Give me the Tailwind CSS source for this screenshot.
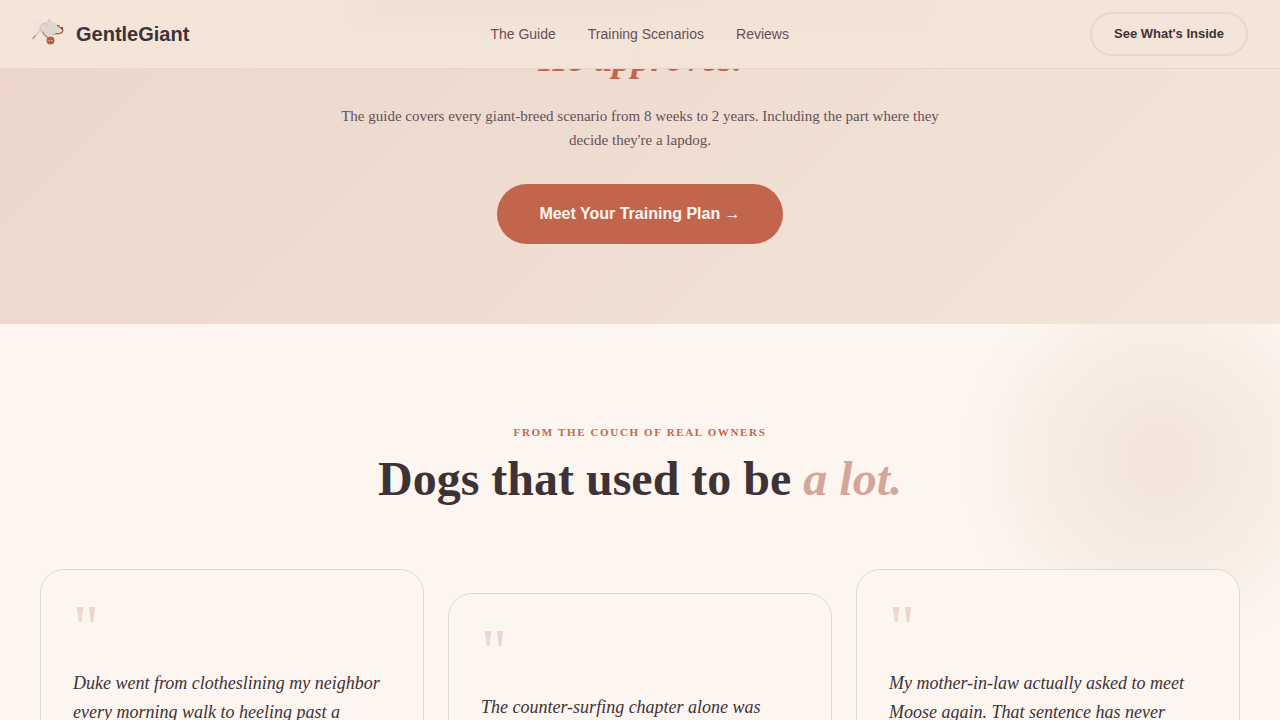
<!DOCTYPE html>
<html lang="en">
  <head>
    <meta charset="UTF-8" />
    <meta name="viewport" content="width=device-width, initial-scale=1.0" />
    <title>GentleGiant</title>
    <!-- Tailwind CSS -->
    <script src="https://cdn.jsdelivr.net/npm/@tailwindcss/browser@4"></script>
  </head>
  <body class="bg-[#fdf6f0] text-[#3d3337] font-['Liberation_Serif',serif]">
    <!-- Header -->
    <header
      class="fixed inset-x-0 top-0 z-10 flex items-center justify-between border-b border-[#ead5c8] bg-linear-to-r from-[#f4e4d9] via-[#f3e4d8] to-[#f4e5da] px-8 py-3 font-['Liberation_Sans',sans-serif]"
    >
      <div class="pointer-events-none absolute inset-x-[28%] top-0 h-5 bg-[#ede0d2]/50 blur-sm"></div>
      <a href="#" class="relative flex items-center gap-3 text-xl font-bold">
        <svg class="size-8" viewBox="0 0 32 32" fill="none" aria-hidden="true">
          <path d="M1 2h11L9 13 1 18Z" fill="#ecdfd5" opacity=".4" />
          <path d="M10 6c2-2 4-1.500 5.500-2.500L17 1.500l2 2.500c3 0 5 1 6.500 3l2 3.500c0 3-1 4.500-3 5.500-3 1-5 1.500-8 1.500-3.500-.5-6-3-7-6Z" fill="#dfd7cf" />
          <path d="M9.500 13.500C7 11 8 6.500 11.500 5.500c2.500-.7 4 1 3.500 3.500" stroke="#cdc4bd" stroke-width="1.200" />
          <path d="M15.500 4 17 1.500l1.500 2.500" stroke="#cdc4bd" />
          <path d="M.5 21 4 17" stroke="#a8988c" stroke-width="1.400" />
          <path d="m4 17 5.500-5" stroke="#d5c9bf" stroke-width="1.200" />
          <path d="M10.500 13.500c1 3 3 4.500 6 6.500" stroke="#a3958e" stroke-width="1.500" />
          <path d="m25 7.500 2 .5.500 1.500" stroke="#8f4a3e" stroke-width="1.200" />
          <path d="M28 9h2.200c1.300 0 1.300 1.800.3 2.500L29 11.500Z" fill="#8d3f36" />
          <path d="M30.500 11c.8 2-.2 3.700-2.200 4.300-1.800.6-3.500.2-5 .5" stroke="#b25b47" stroke-width="1.400" />
          <path d="M23 16c-1.500.4-2 .8-3 1.500" stroke="#cfa89a" />
          <circle cx="18.500" cy="22.500" r="4" fill="#b96243" />
          <path d="M16.500 22.500h1.500M19 22.500h1.500" stroke="#edbd9f" stroke-width="1.200" />
        </svg>
        GentleGiant
      </a>
      <nav class="relative flex gap-8 text-sm text-[#655157]">
        <a href="#guide">The Guide</a>
        <a href="#scenarios">Training Scenarios</a>
        <a href="#reviews">Reviews</a>
      </nav>
      <button class="relative h-11 rounded-full border-2 border-[#e6d6cb] px-[22px] text-[13px] font-bold">
        See What's Inside
      </button>
    </header>

    <main>
      <!-- Call to action -->
      <section
        id="guide"
        class="flex flex-col items-center bg-linear-135 from-[#ecd6cc] via-[#efddd1] via-50% to-[#f4e6da] px-8 pt-8 pb-20 text-center"
      >
        <h2 class="mb-5 text-[38px] leading-[52px] font-bold text-[#c1664c] italic">He approves.</h2>
        <p class="mb-8 max-w-[600px] text-[15px] leading-6 text-[#655157]">
          The guide covers every giant-breed scenario from 8 weeks to 2 years. Including the part
          where they decide they're a lapdog.
        </p>
        <button
          class="h-[60px] rounded-full bg-[#c1664c] px-[42px] font-['Liberation_Sans',sans-serif] text-base font-bold text-[#fef6f0]"
        >
          Meet Your Training Plan →
        </button>
      </section>

      <!-- Reviews -->
      <section id="reviews" class="relative overflow-hidden px-10 pt-[100px] pb-24">
        <div
          class="absolute -top-16 -right-20 size-[400px] rounded-full bg-radial from-[#f2e3db] via-[#f8eee6] via-45% to-transparent to-70%"
        ></div>
        <div class="relative mb-16 text-center">
          <p class="mb-3 text-[11px] leading-4 font-bold tracking-[0.15em] text-[#c1664c] uppercase">
            From the couch of real owners
          </p>
          <h2 class="text-5xl leading-[53px] font-bold">
            Dogs that used to be <em class="text-[#d4a599]">a lot.</em>
          </h2>
        </div>

        <div class="relative grid grid-cols-3 gap-6">
          <article class="rounded-3xl border border-[#e8d8d0] bg-[#fdf5ef] p-8">
            <div class="mb-4 text-[64px] leading-[51px] text-[#ecd6cd]">"</div>
            <p class="text-lg leading-[29px] italic">
              Duke went from clotheslining my neighbor every morning walk to heeling past a
            </p>
          </article>
          <article class="mt-6 rounded-3xl border border-[#e8d8d0] bg-[#fdf5ef] p-8">
            <div class="mb-4 text-[64px] leading-[51px] text-[#ecd6cd]">"</div>
            <p class="text-lg leading-[29px] italic">The counter-surfing chapter alone was</p>
          </article>
          <article class="rounded-3xl border border-[#e8d8d0] bg-[#fdf5ef] p-8">
            <div class="mb-4 text-[64px] leading-[51px] text-[#ecd6cd]">"</div>
            <p class="text-lg leading-[29px] italic">
              My mother-in-law actually asked to meet Moose again. That sentence has never
            </p>
          </article>
        </div>
      </section>
    </main>
  </body>
</html>
